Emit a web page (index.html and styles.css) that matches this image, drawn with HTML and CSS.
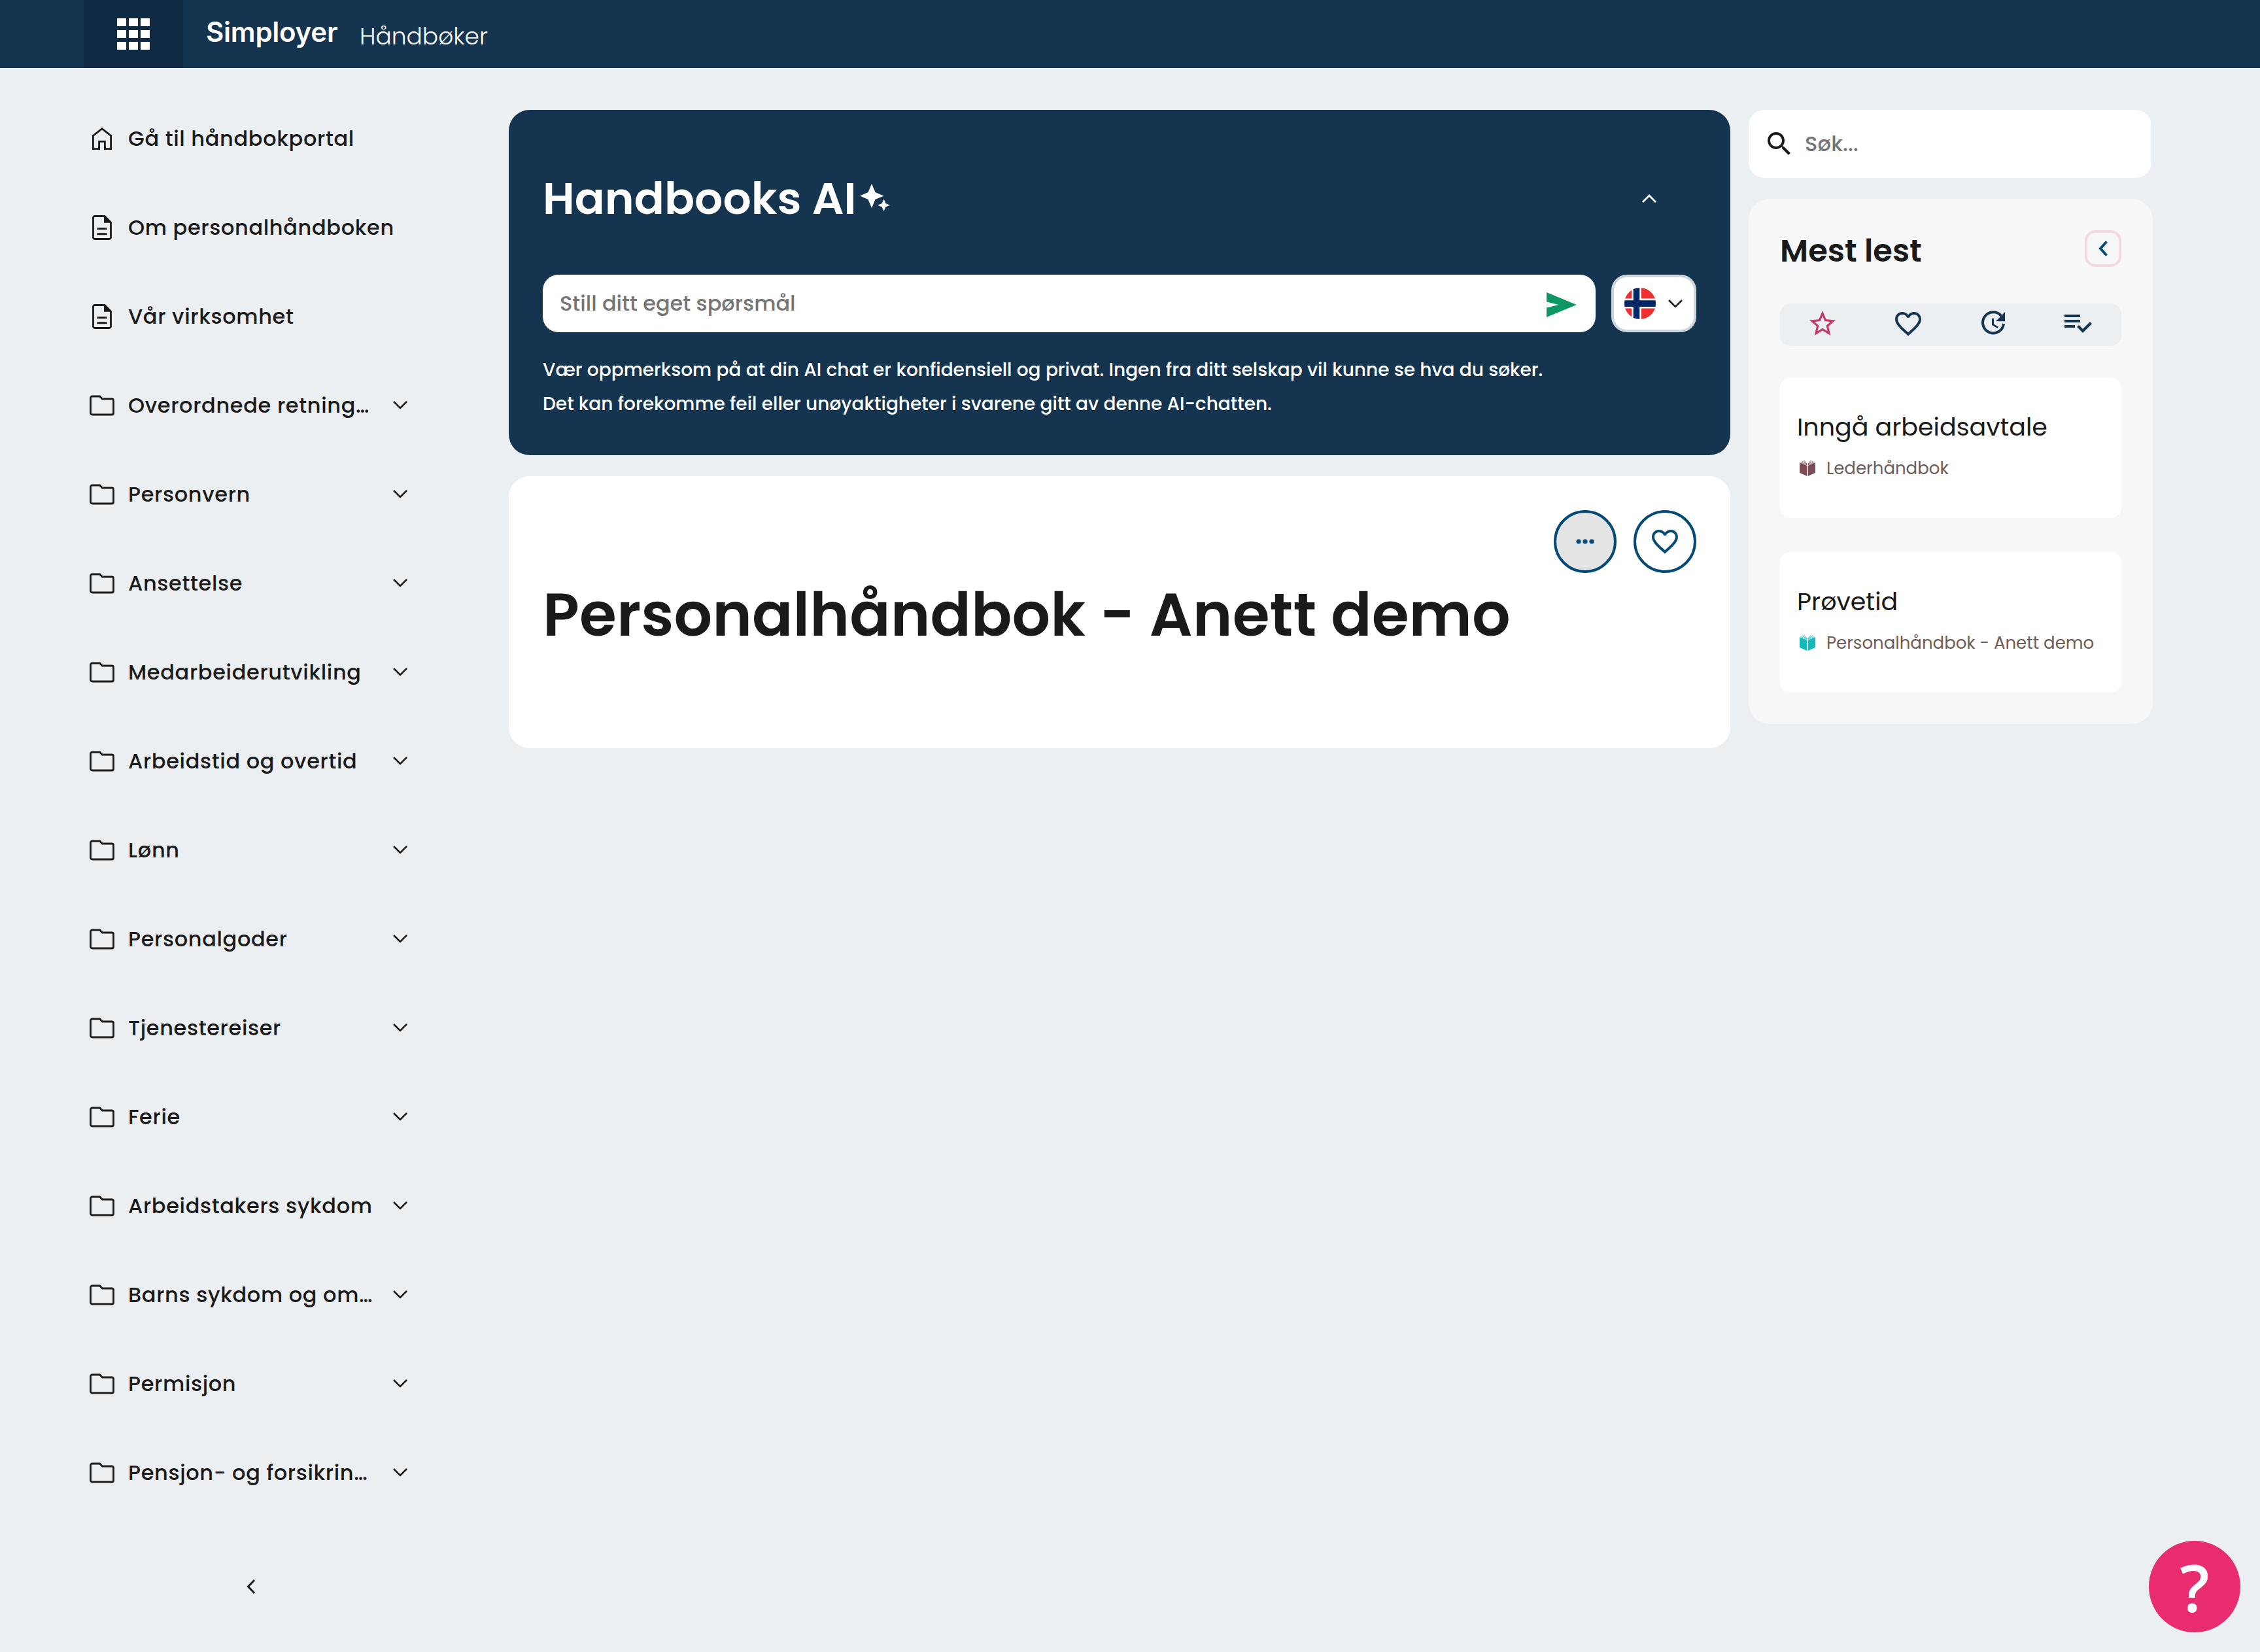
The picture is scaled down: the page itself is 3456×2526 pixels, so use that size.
FILE: index.html
```html
<!DOCTYPE html>
<html lang="no">
<head>
    <meta charset="UTF-8">
    <title>Simployer Håndbøker</title>
    <link rel="stylesheet" href="styles.css">
</head>
<body>
    <!-- Ikoner -->
    <svg class="sprite" xmlns="http://www.w3.org/2000/svg">
        <symbol id="folder" viewBox="0 0 38 32">
            <path d="M4 2h11.5l4 4H34a2.5 2.5 0 0 1 2.5 2.5v19A2.5 2.5 0 0 1 34 30H4a2.5 2.5 0 0 1-2.5-2.5v-23A2.5 2.5 0 0 1 4 2z" fill="none" stroke="currentColor" stroke-width="2.8"/>
        </symbol>
        <symbol id="doc" viewBox="0 0 30 38">
            <path d="M4 1.5h15L28.5 11v23a2.5 2.5 0 0 1-2.5 2.5H4A2.5 2.5 0 0 1 1.5 34V4A2.5 2.5 0 0 1 4 1.5z" fill="none" stroke="currentColor" stroke-width="2.8"/>
            <path d="M18 1.5v10.3h11zM7.5 19.2h15v3h-15zM7.5 27.2h15v3h-15z" fill="currentColor"/>
        </symbol>
        <symbol id="home" viewBox="0 0 30 34">
            <path d="M1.4 32.6V12.5L15 1.8l13.6 10.7v20.1h-9.2V21.4h-8.8v11.2z" fill="none" stroke="currentColor" stroke-width="2.8"/>
        </symbol>
        <symbol id="down" viewBox="0 0 22 13">
            <path d="M1 1l10 10L21 1" fill="none" stroke="currentColor" stroke-width="2.6"/>
        </symbol>
        <symbol id="heart" viewBox="0 0 24 24">
            <path fill="currentColor" d="M16.5 3c-1.74 0-3.41.81-4.5 2.09C10.91 3.81 9.24 3 7.5 3 4.42 3 2 5.42 2 8.5c0 3.78 3.4 6.86 8.55 11.54L12 21.35l1.45-1.32C18.6 15.36 22 12.28 22 8.5 22 5.42 19.58 3 16.5 3zm-4.4 15.55l-.1.1-.1-.1C7.14 14.24 4 11.39 4 8.5 4 6.5 5.5 5 7.5 5c1.54 0 3.04.99 3.57 2.36h1.87C13.46 5.99 14.96 5 16.5 5c2 0 3.5 1.5 3.5 3.5 0 2.89-3.14 5.74-7.9 10.05z"/>
        </symbol>
        <symbol id="book" viewBox="0 0 24 24">
            <path fill="currentColor" d="M0 3l11.3 5v16L0 19zM24 3L12.7 8v16L24 19z"/>
            <path fill="none" stroke="currentColor" stroke-width=".9" d="M2 2.5l9 4.5M4 1l7.3 5M6.5 0l5 5.5M22 2.5L13 7M20 1l-7.3 5M17.5 0l-5 5.5"/>
        </symbol>
    </svg>

    <div class="header">
        <button class="btn-apps" title="Apper">
            <svg width="50" height="48" viewBox="0 0 50 48"><path fill="#fff" d="M0 0h14v12H0zM18 0h14v12H18zM36 0h14v12H36zM0 18h14v12H0zM18 18h14v12H18zM36 18h14v12H36zM0 36h14v12H0zM18 36h14v12H18zM36 36h14v12H36z"/></svg>
        </button>
        <span class="logo">Simployer</span>
        <span class="modul">Håndbøker</span>
    </div>

    <div class="side">
        <nav class="meny">
            <div class="meny-item"><span class="ikon"><svg width="30" height="34"><use href="#home"/></svg></span><span class="navn">Gå til håndbokportal</span></div>
            <div class="meny-item"><span class="ikon"><svg width="30" height="38"><use href="#doc"/></svg></span><span class="navn">Om personalhåndboken</span></div>
            <div class="meny-item"><span class="ikon"><svg width="30" height="38"><use href="#doc"/></svg></span><span class="navn">Vår virksomhet</span></div>
            <div class="meny-item"><span class="ikon"><svg width="38" height="32"><use href="#folder"/></svg></span><span class="navn">Overordnede retning…</span><svg class="pil" width="22" height="13"><use href="#down"/></svg></div>
            <div class="meny-item"><span class="ikon"><svg width="38" height="32"><use href="#folder"/></svg></span><span class="navn">Personvern</span><svg class="pil" width="22" height="13"><use href="#down"/></svg></div>
            <div class="meny-item"><span class="ikon"><svg width="38" height="32"><use href="#folder"/></svg></span><span class="navn">Ansettelse</span><svg class="pil" width="22" height="13"><use href="#down"/></svg></div>
            <div class="meny-item"><span class="ikon"><svg width="38" height="32"><use href="#folder"/></svg></span><span class="navn">Medarbeiderutvikling</span><svg class="pil" width="22" height="13"><use href="#down"/></svg></div>
            <div class="meny-item"><span class="ikon"><svg width="38" height="32"><use href="#folder"/></svg></span><span class="navn">Arbeidstid og overtid</span><svg class="pil" width="22" height="13"><use href="#down"/></svg></div>
            <div class="meny-item"><span class="ikon"><svg width="38" height="32"><use href="#folder"/></svg></span><span class="navn">Lønn</span><svg class="pil" width="22" height="13"><use href="#down"/></svg></div>
            <div class="meny-item"><span class="ikon"><svg width="38" height="32"><use href="#folder"/></svg></span><span class="navn">Personalgoder</span><svg class="pil" width="22" height="13"><use href="#down"/></svg></div>
            <div class="meny-item"><span class="ikon"><svg width="38" height="32"><use href="#folder"/></svg></span><span class="navn">Tjenestereiser</span><svg class="pil" width="22" height="13"><use href="#down"/></svg></div>
            <div class="meny-item"><span class="ikon"><svg width="38" height="32"><use href="#folder"/></svg></span><span class="navn">Ferie</span><svg class="pil" width="22" height="13"><use href="#down"/></svg></div>
            <div class="meny-item"><span class="ikon"><svg width="38" height="32"><use href="#folder"/></svg></span><span class="navn">Arbeidstakers sykdom</span><svg class="pil" width="22" height="13"><use href="#down"/></svg></div>
            <div class="meny-item"><span class="ikon"><svg width="38" height="32"><use href="#folder"/></svg></span><span class="navn">Barns sykdom og om…</span><svg class="pil" width="22" height="13"><use href="#down"/></svg></div>
            <div class="meny-item"><span class="ikon"><svg width="38" height="32"><use href="#folder"/></svg></span><span class="navn">Permisjon</span><svg class="pil" width="22" height="13"><use href="#down"/></svg></div>
            <div class="meny-item"><span class="ikon"><svg width="38" height="32"><use href="#folder"/></svg></span><span class="navn">Pensjon- og forsikrin…</span><svg class="pil" width="22" height="13"><use href="#down"/></svg></div>
            <button class="btn-skjul" title="Skjul meny">
                <svg width="14" height="24" viewBox="0 0 14 24"><path d="M12 2L2.5 12 12 22" fill="none" stroke="currentColor" stroke-width="3"/></svg>
            </button>
        </nav>

        <main class="innhold">
            <section class="ai">
                <div class="ai-topp">
                    <h2>Handbooks AI</h2>
                    <svg class="stjerner" width="46" height="42" viewBox="0 0 46 42"><path fill="#fff" d="M18 0l5.5 13 13 5.5-13 5.5L18 37l-5.5-13L0 18.5 12.5 13zM36.500 23.500l2.800 6.500 6.700 2.800-6.700 2.800-2.800 6.400-2.800-6.400-6.700-2.800 6.700-2.800z"/></svg>
                    <svg class="lukk" width="22" height="13" viewBox="0 0 22 13"><path d="M1 12L11 2l10 10" fill="none" stroke="#fff" stroke-width="2.8"/></svg>
                </div>
                <div class="ai-rad">
                    <div class="ai-felt">
                        <input type="text" placeholder="Still ditt eget spørsmål">
                        <svg class="send" width="46" height="38" viewBox="0 0 46 38"><path fill="#0d9863" d="M0 0l46 19L0 38V23.5L18.5 19 0 14.5z"/></svg>
                    </div>
                    <button class="btn-flagg" title="Norsk">
                        <svg width="48" height="48" viewBox="0 0 48 48">
                            <clipPath id="rund"><circle cx="24" cy="24" r="24"/></clipPath>
                            <g clip-path="url(#rund)">
                                <path fill="#f02d31" d="M0 0h48v48H0z"/>
                                <path fill="#fff" d="M11 0h15v48H11zM0 16.6h48v15H0z"/>
                                <path fill="#002664" d="M13.7 0h9.6v48h-9.6zM0 19.3h48v9.6H0z"/>
                            </g>
                        </svg>
                        <svg width="22" height="13"><use href="#down"/></svg>
                    </button>
                </div>
                <p>Vær oppmerksom på at din AI chat er konfidensiell og privat. Ingen fra ditt selskap vil kunne se hva du søker.</p>
                <p>Det kan forekomme feil eller unøyaktigheter i svarene gitt av denne AI-chatten.</p>
            </section>

            <section class="bok">
                <div class="bok-btns">
                    <button class="btn-rund mer" title="Mer"><svg width="28" height="8" viewBox="0 0 28 8"><circle cx="4" cy="4" r="3.6"/><circle cx="14" cy="4" r="3.6"/><circle cx="24" cy="4" r="3.6"/></svg></button>
                    <button class="btn-rund" title="Favoritt"><svg width="48" height="48"><use href="#heart"/></svg></button>
                </div>
                <h1>Personalhåndbok - Anett demo</h1>
            </section>
        </main>

        <aside class="hoyre">
            <div class="sok">
                <svg width="48" height="48" viewBox="0 0 24 24"><path fill="currentColor" d="M15.5 14h-.79l-.28-.27C15.41 12.59 16 11.11 16 9.5 16 5.91 13.09 3 9.5 3S3 5.91 3 9.5 5.91 16 9.5 16c1.61 0 3.09-.59 4.23-1.57l.27.28v.79l5 4.99L20.49 19l-4.99-5zm-6 0C7.01 14 5 11.99 5 9.5S7.01 5 9.5 5 14 7.01 14 9.5 11.99 14 9.5 14z"/></svg>
                <input type="text" placeholder="Søk...">
            </div>
            <div class="panel">
                <div class="panel-topp">
                    <h3>Mest lest</h3>
                    <button class="btn-pil" title="Skjul"><svg width="14" height="24" viewBox="0 0 14 24"><path d="M12.5 1.5L3 12l9.5 10.5" fill="none" stroke="#054a77" stroke-width="4"/></svg></button>
                </div>
                <div class="faner">
                    <span class="aktiv"><svg width="48" height="48" viewBox="0 0 24 24"><path fill="currentColor" d="M22 9.24l-7.19-.62L12 2 9.19 8.63 2 9.24l5.46 4.73L5.82 21 12 17.27 18.18 21l-1.63-7.03L22 9.24zM12 15.4l-3.76 2.27 1-4.28-3.32-2.88 4.38-.38L12 6.1l1.71 4.04 4.38.38-3.32 2.88 1 4.28L12 15.4z"/></svg></span>
                    <span><svg width="48" height="48"><use href="#heart"/></svg></span>
                    <span><svg width="48" height="48" viewBox="0 0 24 24"><path fill="none" stroke="currentColor" stroke-width="2" d="M18.3 6.2A8 8 0 1 0 20 12"/><path fill="currentColor" d="M21 3v7.1h-7zM11 8h1.5v4.25l3.5 2.08-.72 1.21L11 13z"/></svg></span>
                    <span class="liste"><svg width="48" height="48" viewBox="0 0 24 24"><path fill="currentColor" d="M14 10H2v2h12v-2zm0-4H2v2h12V6zM2 16h8v-2H2v2zm19.5-4.5L23 13l-6.99 7-4.51-4.5L13 14l3.01 3 5.49-5.5z"/></svg></span>
                </div>
                <div class="kort">
                    <h4>Inngå arbeidsavtale</h4>
                    <div class="kilde brun"><svg width="24" height="24"><use href="#book"/></svg><span>Lederhåndbok</span></div>
                </div>
                <div class="kort">
                    <h4>Prøvetid</h4>
                    <div class="kilde turkis"><svg width="24" height="24"><use href="#book"/></svg><span>Personalhåndbok - Anett demo</span></div>
                </div>
            </div>
        </aside>
    </div>

    <button class="hjelp" title="Hjelp">?</button>
</body>
</html>
```
FILE: styles.css
```css
* { box-sizing: border-box; }
body {
    margin: 0;
    height: 2526px;
    overflow: hidden;
    background: #ebeff2;
    color: #1a1a1a;
    font-family: Poppins, Inter, sans-serif;
}
h1, h2, h3, h4, p { margin: 0; }
button, input {
    font: inherit;
    color: inherit;
    border: none;
    background: none;
    padding: 0;
}
svg { display: block; flex: none; }
.sprite {
    position: absolute;
    width: 0;
    height: 0;
}
.header {
    height: 104px;
    padding-left: 128px;
    background: #143450;
    box-shadow: 0 2px 0 #eeebf7;
    display: flex;
    align-items: center;
    color: #fff;
}
.btn-apps {
    width: 152px;
    height: 104px;
    background: #112a43;
    display: flex;
    align-items: center;
    justify-content: center;
}
.logo {
    width: 206px;
    margin: 0 0 7px 35px;
    font-family: Inter, sans-serif;
    font-size: 42px;
    font-weight: 600;
    letter-spacing: -0.25px;
}
.modul {
    margin: 7px 0 0 29px;
    font-size: 36px;
    font-weight: 300;
}
.side {
    display: flex;
    padding-left: 128px;
}
/* Meny til venstre */
.meny {
    width: 512px;
    padding-top: 40px;
    margin-right: 138px;
}
.meny-item {
    height: 136px;
    display: flex;
    align-items: center;
}
.ikon {
    flex: none;
    width: 56px;
    margin-right: 12px;
    display: flex;
    justify-content: center;
}
.navn {
    flex: 1;
    min-width: 0;
    white-space: nowrap;
    font-size: 32px;
    font-weight: 500;
    letter-spacing: 0.64px;
}
.pil { margin: 0 17px 2px; }
.btn-skjul {
    width: 100%;
    margin-top: 94px;
    display: flex;
    justify-content: center;
}
/* Handbooks AI */
.innhold {
    width: 1868px;
    padding-top: 64px;
    margin-right: 28px;
}
.ai {
    height: 528px;
    padding: 84px 52px 0;
    border-radius: 32px;
    background: #143450;
    color: #fff;
}
.ai-topp {
    height: 104px;
    margin-bottom: 64px;
    display: flex;
    align-items: center;
}
.ai h2 {
    font-size: 68px;
    font-weight: 600;
}
.stjerner { margin: 0 0 4px 6px; }
.lukk { margin: 0 61px 2px auto; }
.ai-rad {
    display: flex;
    gap: 24px;
    margin-bottom: 32px;
}
.ai-felt {
    flex: 1;
    height: 88px;
    padding: 0 29px 0 26px;
    border-radius: 24px;
    background: #fff;
    display: flex;
    align-items: center;
}
.ai-felt input {
    flex: 1;
    font-size: 32px;
    font-weight: 500;
}
.send { margin-top: 3px; }
input::placeholder { color: #757575; }
.btn-flagg {
    width: 130px;
    height: 88px;
    padding-right: 2px;
    border: 4px solid #cdd5dd;
    border-radius: 24px;
    background: #fff;
    color: #1a1a1a;
    display: flex;
    align-items: center;
    justify-content: center;
    gap: 19px;
}
.ai p {
    font-size: 28px;
    line-height: 52px;
    font-weight: 500;
    white-space: nowrap;
}
/* Håndbok */
.bok {
    height: 416px;
    margin-top: 32px;
    padding: 52px 52px 0;
    border-radius: 32px;
    background: #fff;
}
.bok-btns {
    display: flex;
    justify-content: flex-end;
    gap: 26px;
}
.btn-rund {
    width: 96px;
    height: 96px;
    border: 4px solid #054a77;
    border-radius: 50%;
    color: #054a77;
    fill: #054a77;
    display: flex;
    align-items: center;
    justify-content: center;
}
.btn-rund.mer { background: #e4e4e4; }
.bok h1 {
    margin-top: 4px;
    font-size: 92px;
    line-height: 120px;
    font-weight: 600;
    letter-spacing: 0.1px;
    white-space: nowrap;
}
/* Høyre kolonne */
.hoyre {
    width: 618px;
    padding-top: 64px;
}
.sok {
    width: 616px;
    height: 104px;
    padding-left: 23px;
    border-radius: 24px;
    background: #fff;
    display: flex;
    align-items: center;
    gap: 15px;
}
.sok input {
    width: 400px;
    font-size: 32px;
    font-weight: 500;
    letter-spacing: 0.2px;
}
.panel {
    height: 803px;
    margin-top: 32px;
    padding: 48px 48px 0;
    border-radius: 32px;
    background: #f6f7f9;
}
.panel-topp {
    height: 56px;
    display: flex;
    align-items: center;
    justify-content: space-between;
}
.panel h3 {
    padding-top: 8px;
    font-size: 48px;
    font-weight: 600;
}
.btn-pil {
    width: 56px;
    height: 56px;
    border: 4px solid #f5d8e0;
    border-radius: 16px;
    display: flex;
    align-items: center;
    justify-content: center;
}
.faner {
    height: 65px;
    margin-top: 56px;
    padding-bottom: 4px;
    border-radius: 16px;
    background: #ebeff2;
    color: #143450;
    display: flex;
    align-items: center;
}
.faner span {
    width: 25%;
    display: flex;
    justify-content: center;
}
.faner .aktiv { color: #c63a66; }
.faner .liste { padding: 0 3px 4px 0; }
.kort {
    height: 215px;
    margin-top: 48px;
    padding: 50px 24px 0 26px;
    border-radius: 16px;
    background: #fff;
}
.kort + .kort { margin-top: 52px; }
.kort h4 {
    font-size: 38px;
    line-height: 52px;
    font-weight: 400;
}
.kilde {
    height: 32px;
    margin: 21px 0 0 4px;
    display: flex;
    align-items: center;
    gap: 17px;
    font-size: 26px;
    white-space: nowrap;
}
.kilde span { color: #6e5c57; }
.brun { color: #7d4b55; }
.turkis { color: #14b9b9; }
/* Hjelp-knapp, ligger over siden */
.hjelp {
    position: fixed;
    right: 30px;
    bottom: 30px;
    width: 140px;
    height: 140px;
    border-radius: 50%;
    background: #e92b6f;
    color: #fff;
    font: 600 100px/140px "Open Sans", sans-serif;
    text-align: center;
}
```
